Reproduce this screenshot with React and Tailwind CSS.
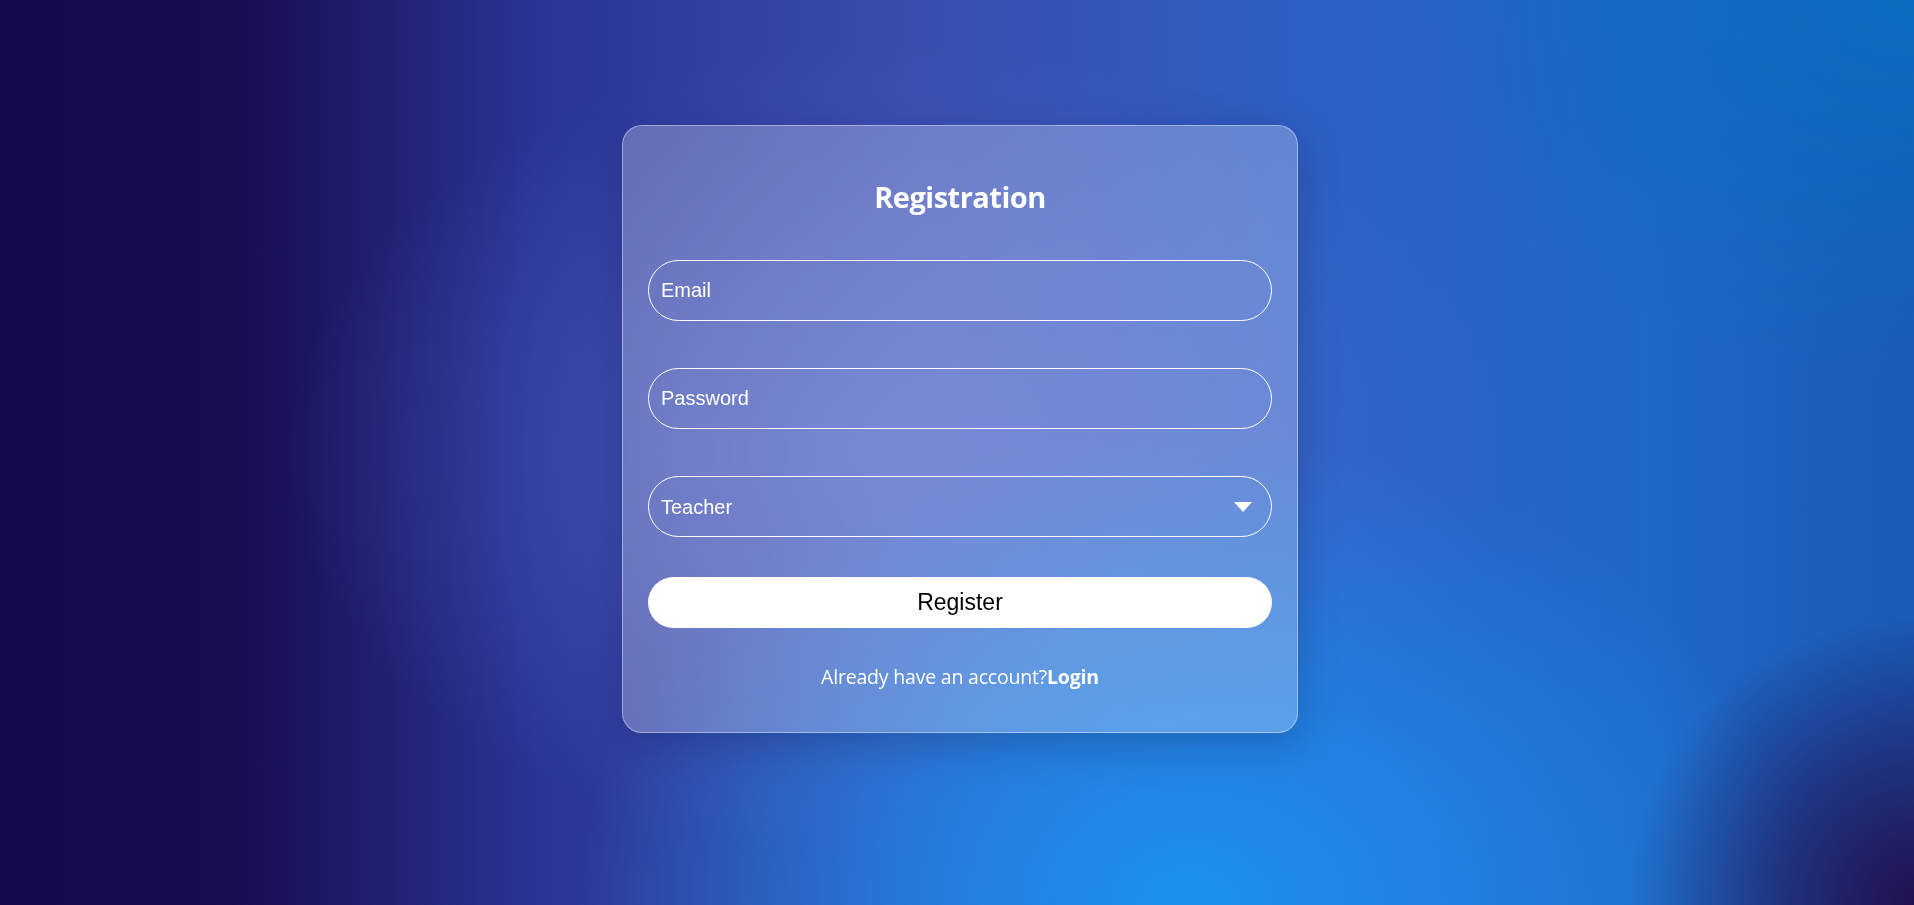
import React from "react";

export default function App() {
  return (
    <div className="w-full flex justify-center pl-[6px] pt-[125px] bg-[#150a4c] bg-[radial-gradient(ellipse_15%_32%_at_100%_100%,#22104f_0%,rgba(34,16,79,0.6)_45%,rgba(34,16,79,0)_100%),radial-gradient(ellipse_32%_52%_at_62%_100%,#1d92ee_0%,rgba(30,140,235,0.7)_45%,rgba(30,140,235,0)_100%),radial-gradient(ellipse_26%_42%_at_100%_0%,#0a6cc0_0%,rgba(10,108,192,0)_100%),radial-gradient(ellipse_32%_45%_at_47%_50%,rgba(95,120,225,0.5)_0%,rgba(95,120,225,0)_100%),linear-gradient(90deg,#140a4b_0%,#170c50_12%,#2a3494_28%,#3a4db0_48%,#2e5fc4_68%,#1f68c6_86%,#1a5ab8_100%)]" style={{ height: 905 }}>
      <div className="w-[676px] h-[608px] rounded-[20px] border border-white/40 bg-white/25 backdrop-blur-[14px] shadow-[0_10px_40px_rgba(10,10,60,0.25)] px-[25px] pt-[51px] flex flex-col items-stretch">
        <h2 className="text-center text-white font-bold text-[29px] leading-[40px] h-[40px] font-['Open_Sans',sans-serif] tracking-[-0.5px]">
          Registration
        </h2>
        <div className="mt-[43px] flex flex-col gap-[47px]">
          <input
            placeholder="Email"
            className="h-[61px] w-full rounded-full border border-white bg-transparent pl-[12px] text-[20px] text-white placeholder:text-white font-['Liberation_Sans',Arial,sans-serif] outline-none"
          />
          <input
            placeholder="Password"
            type="password"
            className="h-[61px] w-full rounded-full border border-white bg-transparent pl-[12px] text-[20px] text-white placeholder:text-white font-['Liberation_Sans',Arial,sans-serif] outline-none"
          />
          <div className="h-[61px] w-full rounded-full border border-white flex items-center justify-between pl-[12px] pr-[19px] text-[20px] text-white font-['Liberation_Sans',Arial,sans-serif]">
            <span>Teacher</span>
            <svg width="18" height="10" viewBox="0 0 18 10">
              <path d="M0 0 L18 0 L9 10 Z" fill="white" />
            </svg>
          </div>
        </div>
        <button className="mt-[40px] h-[51px] w-full rounded-full bg-white text-black text-[23px] font-['Liberation_Sans',Arial,sans-serif]">
          Register
        </button>
        <p className="mt-[37px] text-center text-white text-[19.5px] leading-[24px] font-['Open_Sans',sans-serif] tracking-[-0.2px]">
          Already have an account?<span className="font-bold">Login</span>
        </p>
      </div>
    </div>
  );
}
